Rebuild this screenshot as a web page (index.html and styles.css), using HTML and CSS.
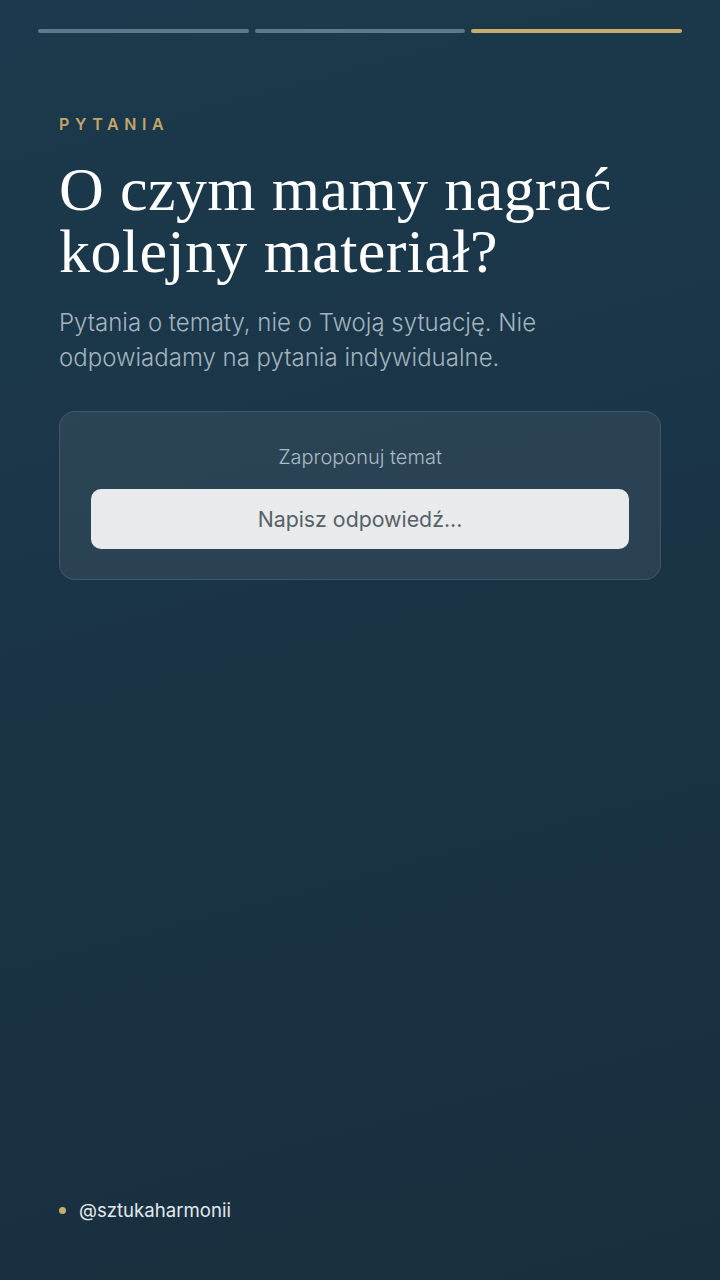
FILE: index.html
```html
<!DOCTYPE html>
<html>
<head>
  <title>Pytania</title>
  <link rel="stylesheet" href="styles.css">
</head>
<body>
  <div class="story">
    <div class="progress">
      <span class="seg"></span>
      <span class="seg"></span>
      <span class="seg active"></span>
    </div>

    <div class="content">
      <div class="eyebrow">PYTANIA</div>
      <h1>O czym mamy nagrać kolejny materiał?</h1>
      <p class="lead">Pytania o tematy, nie o Twoją sytuację. Nie odpowiadamy na pytania indywidualne.</p>

      <div class="card">
        <div class="card-label">Zaproponuj temat</div>
        <div class="answer">Napisz odpowiedź...</div>
      </div>
    </div>

    <div class="footer">
      <span class="dot"></span>
      <span class="handle">@sztukaharmonii</span>
    </div>
  </div>
</body>
</html>
```

FILE: styles.css
```css
body {
  margin: 0;
  font-family: Inter, "Noto Sans", sans-serif;
  background: #1a3446;
}
.story {
  height: 1280px;
  box-sizing: border-box;
  display: flex;
  flex-direction: column;
  background: linear-gradient(165deg, #1c3a4d 0%, #1a3446 50%, #182f3d 100%);
}
.progress {
  display: flex;
  gap: 6px;
  padding: 29px 38px 0;
}
.seg {
  flex: 1;
  height: 4px;
  border-radius: 2px;
  background: #5f7b8b;
}
.seg.active {
  background: #c9ab6c;
}
.content {
  padding: 0 59px;
  flex: 1;
}
.eyebrow {
  margin-top: 81px;
  font-size: 16px;
  font-weight: 600;
  letter-spacing: 5.6px;
  color: #c4a56a;
}
h1 {
  margin: 24px 0 0;
  font-family: "Liberation Serif", "DejaVu Serif", serif;
  font-weight: 400;
  font-size: 62px;
  line-height: 62px;
  color: #ffffff;
  letter-spacing: 0.4px;
}
.lead {
  margin: 23px 0 0;
  font-size: 24px;
  font-weight: 300;
  line-height: 35px;
  color: #a3b4bf;
  max-width: 560px;
}
.card {
  margin-top: 36px;
  padding: 33px 31px 30px;
  border: 1px solid rgba(255, 255, 255, 0.1);
  border-radius: 16px;
  background: rgba(255, 255, 255, 0.07);
  text-align: center;
}
.card-label {
  font-size: 20px;
  font-weight: 300;
  color: #a9b9c3;
  line-height: 24px;
}
.answer {
  margin-top: 20px;
  height: 60px;
  line-height: 60px;
  border-radius: 10px;
  background: #e8eaec;
  color: #566168;
  font-size: 21.3px;
}
.footer {
  display: flex;
  align-items: center;
  gap: 13px;
  padding: 0 59px 59px;
}
.dot {
  width: 7px;
  height: 7px;
  border-radius: 50%;
  background: #c9ab6c;
}
.handle {
  font-size: 18.6px;
  color: #e3e9ed;
}
```
